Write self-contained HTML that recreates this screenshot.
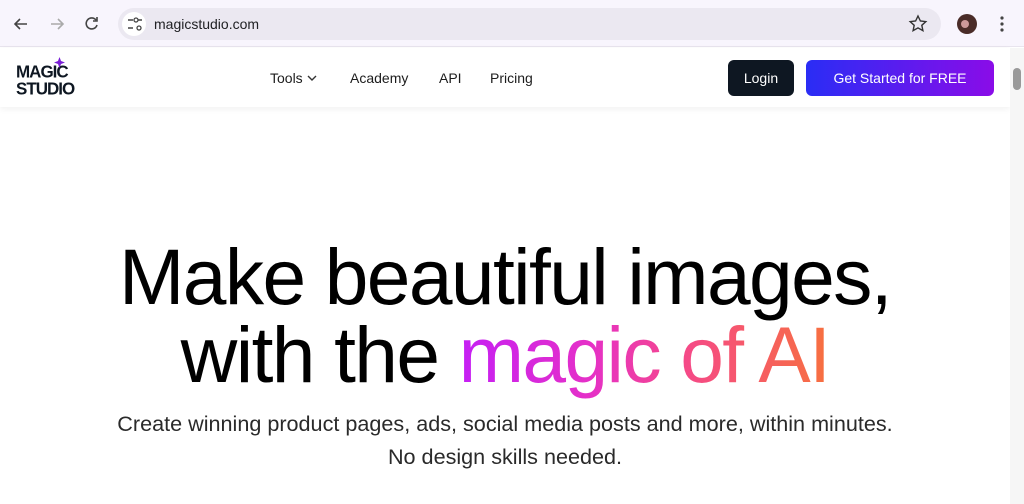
<!DOCTYPE html>
<html><head><meta charset="utf-8"><style>
*{margin:0;padding:0;box-sizing:border-box}
body{width:1024px;height:504px;overflow:hidden;background:#fff;font-family:"Liberation Sans",sans-serif;position:relative}
.chrome{position:absolute;left:0;top:0;width:1024px;height:47px;background:#f8f5fd;border-bottom:1px solid #e8e4ee}
.addr{position:absolute;left:118px;top:8px;width:823px;height:32px;border-radius:16px;background:#ebe8f1}
.url{position:absolute;left:154px;top:16px;font-size:14px;color:#202124}
.nav{position:absolute;left:0;top:48px;width:1010px;height:59px;background:#fff;box-shadow:0 2px 6px rgba(0,0,0,.06)}
.nav a{position:absolute;top:22px;font-size:14px;color:#1c1c1c}
.login{position:absolute;left:728px;top:12px;width:66px;height:36px;background:#0e1722;border-radius:6px;color:#fff;font-size:14px;text-align:center;line-height:36px}
.gs{position:absolute;left:806px;top:12px;width:188px;height:36px;border-radius:6px;background:linear-gradient(90deg,#2a2df5,#8a0ce8);color:#fff;font-size:14px;text-align:center;line-height:36px}
.sb{position:absolute;left:1010px;top:48px;width:14px;height:456px;background:#f6f6f6}
h1{position:absolute;left:0;width:1010px;top:238px;text-align:center;font-weight:normal;font-size:78.5px;line-height:78px;letter-spacing:-1.6px;color:#000}
.g{background:linear-gradient(90deg,#c51ff5 0%,#e530c8 35%,#f5488a 60%,#f7703f 100%);-webkit-background-clip:text;background-clip:text;color:transparent}
p{position:absolute;left:0;width:1010px;top:407px;text-align:center;font-size:21.6px;line-height:33px;color:#2a2a2a}
.logo{position:absolute;left:16px;top:16px;font-weight:900;font-size:17px;line-height:16px;color:#0e1722;letter-spacing:-1px;transform:scaleY(1.05);transform-origin:top left}
</style></head><body>
<div class="chrome">
<svg width="1024" height="47" style="position:absolute;left:0;top:0">
<path d="M27 24H15M20 19l-5 5 5 5" stroke="#444" stroke-width="1.6" fill="none"/>
<path d="M51 24h12M58 19l5 5-5 5" stroke="#aaa" stroke-width="1.6" fill="none"/>
<path d="M96 20a5.5 5.5 0 1 0 1 5M97 17v4h-4" stroke="#444" stroke-width="1.6" fill="none"/>
</svg>
<div class="addr"></div>
<svg width="1024" height="47" style="position:absolute;left:0;top:0">
<circle cx="134" cy="24" r="12" fill="#fff"/>
<path d="M128 20h5M128 28h5M138 20h4" stroke="#444" stroke-width="1.5"/><circle cx="136" cy="20" r="2" stroke="#444" fill="none" stroke-width="1.3"/><circle cx="139" cy="28" r="2" stroke="#444" fill="none" stroke-width="1.3"/>
<path d="M918 16l2.4 5 5.4.6-4 3.7 1.1 5.3-4.9-2.7-4.9 2.7 1.1-5.3-4-3.7 5.4-.6z" stroke="#333" stroke-width="1.4" fill="none"/>
<circle cx="967" cy="24" r="10" fill="#4a2c28"/><circle cx="965" cy="24" r="4" fill="#c99"/>
<circle cx="1002" cy="18" r="1.6" fill="#444"/><circle cx="1002" cy="24" r="1.6" fill="#444"/><circle cx="1002" cy="30" r="1.6" fill="#444"/>
</svg>
<div class="url">magicstudio.com</div>
</div>
<div class="nav">
<div class="logo">MAGIC<br>STUDIO</div>
<svg style="position:absolute;left:54px;top:9px" width="11" height="11"><path d="M5.5 0L7 4 11 5.5 7 7 5.5 11 4 7 0 5.5 4 4z" fill="#7a1fd6"/></svg>
<a style="left:270px">Tools</a>
<svg style="position:absolute;left:307px;top:26px" width="10" height="8"><path d="M1 2l4 4 4-4" stroke="#333" stroke-width="1.4" fill="none"/></svg>
<a style="left:350px">Academy</a>
<a style="left:439px">API</a>
<a style="left:490px">Pricing</a>
<div class="login">Login</div>
<div class="gs">Get Started for FREE</div>
</div>
<div class="sb"><div style="position:absolute;left:3px;top:20px;width:8px;height:22px;border-radius:4px;background:#999"></div></div>
<h1>Make beautiful images,<br>with the <span class="g">magic of AI</span></h1>
<p>Create winning product pages, ads, social media posts and more, within minutes.<br>No design skills needed.</p>
</body></html>
